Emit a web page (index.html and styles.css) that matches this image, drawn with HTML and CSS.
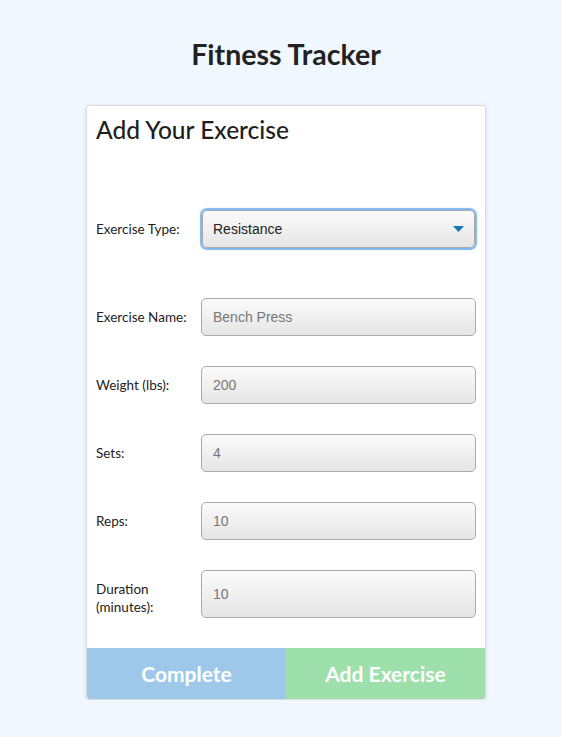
FILE: index.html
```html
<!DOCTYPE html>
<html>
<head>
<meta charset="utf-8">
<title>Fitness Tracker</title>
<link rel="stylesheet" href="styles.css">
</head>
<body>
<main class="page">
  <h1 class="title">Fitness Tracker</h1>
  <section class="card">
    <h2 class="card-title">Add Your Exercise</h2>
    <form class="form">
      <div class="row row-type">
        <label class="label">Exercise Type:</label>
        <div class="select">
          <span class="select-value">Resistance</span>
          <svg class="caret" width="11" height="6" viewBox="0 0 11 6"><path d="M0 0 H11 L5.5 6 Z" fill="#1578b8"/></svg>
        </div>
      </div>
      <div class="row">
        <label class="label">Exercise Name:</label>
        <div class="input">Bench Press</div>
      </div>
      <div class="row">
        <label class="label">Weight (lbs):</label>
        <div class="input">200</div>
      </div>
      <div class="row">
        <label class="label">Sets:</label>
        <div class="input">4</div>
      </div>
      <div class="row">
        <label class="label">Reps:</label>
        <div class="input">10</div>
      </div>
      <div class="row">
        <label class="label label-wrap">Duration (minutes):</label>
        <div class="input">10</div>
      </div>
    </form>
    <div class="actions">
      <button class="btn btn-complete" type="button">Complete</button>
      <button class="btn btn-add" type="button">Add Exercise</button>
    </div>
  </section>
</main>
</body>
</html>
```
FILE: styles.css
```css
* { box-sizing: border-box; }
html, body { margin: 0; padding: 0; }
body {
  background: #f0f7ff;
  font-family: Lato, "Open Sans", sans-serif;
  color: #222;
}
.page {
  padding: 36px 0 0 10px;
}
.title {
  margin: 0 0 33px;
  font-size: 28.5px;
  line-height: 36px;
  font-weight: 700;
  text-align: center;
  color: #222;
}
.card {
  width: 400px;
  margin: 0 auto;
  background: #fff;
  border: 1px solid #dcdcdc;
  border-radius: 4px;
  box-shadow: 0 1px 4px rgba(0, 0, 0, 0.12);
  overflow: hidden;
}
.card-title {
  margin: 0;
  padding: 9px 9px 0;
  font-size: 24.5px;
  line-height: 29px;
  font-weight: 500;
  color: #1e1e1e;
}
.form {
  display: flex;
  flex-direction: column;
  gap: 30px;
  padding: 66px 9px 30px;
}
.row {
  display: flex;
  align-items: stretch;
  gap: 5px;
}
.row-type {
  margin-bottom: 20px;
}
.label {
  width: 100px;
  flex: none;
  display: flex;
  align-items: center;
  font-size: 13.5px;
  line-height: 18px;
  padding: 6px 0;
  color: #222;
}
.label-wrap {
  padding: 10px 0 2px;
}
.input, .select {
  flex: 1;
  min-height: 38px;
  display: flex;
  align-items: center;
  padding: 0 11px;
  border: 1px solid #aaa;
  border-radius: 5px;
  background: linear-gradient(#fbfbfb, #e5e5e5);
  font-family: "Liberation Sans", Arial, sans-serif;
  font-size: 14px;
  color: #777;
}
.select {
  margin: 0 1px;
  justify-content: space-between;
  color: #222;
  box-shadow: 0 0 1px 2px #7db7f2;
  padding: 0 10px;
}
.caret { display: block; }
.actions {
  display: flex;
}
.btn {
  flex: 1;
  height: 51px;
  border: 0;
  margin: 0;
  font-family: Lato, sans-serif;
  font-weight: 700;
  font-size: 21px;
  color: #fff;
  cursor: pointer;
}
.btn-complete { background: #9dc8ea; }
.btn-add { background: #9de0ab; }
```
